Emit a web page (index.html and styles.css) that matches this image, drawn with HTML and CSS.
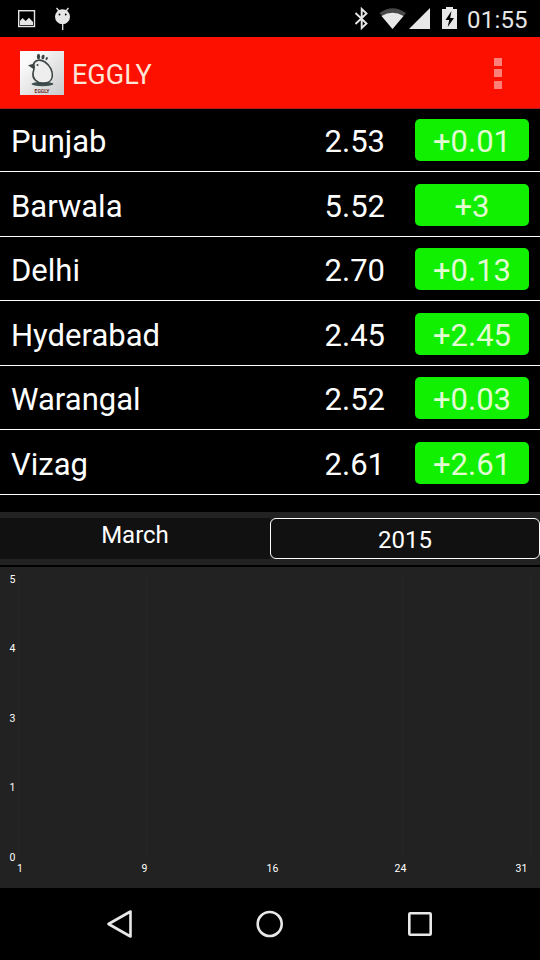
FILE: index.html
```html
<!DOCTYPE html>
<html lang="en">
<head>
<meta charset="utf-8">
<title>EGGLY</title>
<link rel="stylesheet" href="styles.css">
</head>
<body>
<div class="screen">
  <header class="status">
    <svg class="status-left" width="90" height="37" viewBox="0 0 90 37">
      <rect x="18.7" y="10.7" width="15.8" height="15.8" fill="none" stroke="#e6e6e6" stroke-width="1.4"/>
      <path d="M20 25v-4l2.500-3 3.200 3 3.300-3.200L33 22v3z" fill="#e6e6e6"/>
      <circle cx="62.500" cy="16.700" r="7.500" fill="#e6e6e6"/>
      <path d="M59 11l-2.500-3M66 11l2.500-3M62.700 24v6" stroke="#e6e6e6" stroke-width="1.300"/>
      <circle cx="59.500" cy="14.500" r=".9"/><circle cx="65.700" cy="14.500" r=".9"/>
    </svg>
    <svg class="status-right" width="106" height="37" viewBox="354 0 106 37">
      <path d="M355.500 13l11 10.500-4.800 4.500V9l4.800 4.500-11 10.500" fill="none" stroke="#e6e6e6" stroke-width="1.900"/>
      <path d="M379.500 13q13-9.500 26.500 0L392.500 29z" fill="#484848"/>
      <path d="M381.500 16q11-6.500 22 0L392.500 29z" fill="#e8e8e8"/>
      <path d="M430 8v21h-21z" fill="#e8e8e8"/>
      <path d="M442 9h4V7h7v2h4v20h-15z" fill="#e8e8e8"/>
      <path d="M451.500 11l-6 9h3.700l-1.500 7 6.300-9h-3.800z"/>
    </svg>
    <span class="clock">01:55</span>
  </header>
  <div class="appbar">
    <svg class="logo" width="44" height="44" viewBox="0 0 44 44">
      <defs><linearGradient id="lg" x1="0" y1="0" x2="1" y2="1"><stop offset=".2" stop-color="#fafafa"/><stop offset="1" stop-color="#c9cacb"/></linearGradient></defs>
      <rect width="44" height="44" fill="url(#lg)"/>
      <ellipse cx="22.500" cy="33" rx="11" ry="2.200" fill="#3c4d4d"/>
      <path d="M13.500 13C15.500 8.500 20.500 8 25 11c5 3.500 8 9.500 7.300 14.500-.6 4.500-4.800 6.800-9.800 6.500-6-.3-10.300-4.500-9.500-10 .4-3 2.500-4.500.5-9z" fill="#eee" stroke="#3c4444" stroke-width="1.600"/>
      <path d="M14.500 12.500l-6.500 1.700 6 4.300z" fill="#3c4444"/>
      <circle cx="17.500" cy="14" r="1" fill="#3c4444"/>
      <g fill="#3c4444"><ellipse cx="18.500" cy="5.500" rx="1.600" ry="2.800"/><ellipse cx="23" cy="6" rx="1.500" ry="2.400" transform="rotate(15 23 6)"/><ellipse cx="26.700" cy="7.600" rx="1" ry="1.700" transform="rotate(30 26.700 7.600)"/></g>
      <text class="logo-text" x="22" y="41.800" text-anchor="middle">EGGLY</text>
    </svg>
    <h1 class="title">EGGLY</h1>
    <div class="overflow"><i></i><i></i><i></i></div>
  </div>
  <main class="rates">
    <div class="rate"><span class="city">Punjab</span><span class="price">2.53</span><span class="change">+0.01</span></div>
    <div class="rate"><span class="city">Barwala</span><span class="price">5.52</span><span class="change">+3</span></div>
    <div class="rate"><span class="city">Delhi</span><span class="price">2.70</span><span class="change">+0.13</span></div>
    <div class="rate"><span class="city">Hyderabad</span><span class="price">2.45</span><span class="change">+2.45</span></div>
    <div class="rate"><span class="city">Warangal</span><span class="price">2.52</span><span class="change">+0.03</span></div>
    <div class="rate"><span class="city">Vizag</span><span class="price">2.61</span><span class="change">+2.61</span></div>
  </main>
  <div class="period"><div class="month">March</div><div class="year">2015</div></div>
  <svg class="chart" width="540" height="321" viewBox="0 567 540 321">
    <path d="M18.500 576v280M146.500 576v280M402.500 576v280M530.500 576v280" stroke="#252525" stroke-width="2"/>
    <g class="axis" text-anchor="middle">
      <text x="12.500" y="582.500">5</text><text x="12.500" y="652">4</text><text x="12.500" y="721.500">3</text><text x="12.500" y="791">1</text><text x="12.500" y="860.500">0</text>
      <text x="20" y="872">1</text><text x="144.500" y="872">9</text><text x="272.500" y="872">16</text><text x="400.500" y="872">24</text><text x="521.500" y="872">31</text>
    </g>
  </svg>
  <nav class="navbar">
    <svg width="30" height="30" viewBox="105 909 30 30"><path d="M108.500 924L130.500 911.500v25z"/></svg>
    <svg width="30" height="30" viewBox="255 909 30 30"><circle cx="269.700" cy="924" r="12"/></svg>
    <svg width="30" height="30" viewBox="405 909 30 30"><rect x="409.300" y="913.300" width="21.400" height="21.400" rx="1"/></svg>
  </nav>
</div>
</body>
</html>
```
FILE: styles.css
```css
* { box-sizing: border-box; }
body { margin: 0; background: #000; color: #fff; font-family: Roboto, "Liberation Sans", sans-serif; }
.screen { width: 540px; height: 960px; display: flex; flex-direction: column; overflow: hidden; }
.status { height: 37px; display: flex; align-items: center; flex: none; }
.status-right { margin-left: auto; }
.clock { width: 68px; margin-left: 7px; margin-right: 5px; font-size: 24px; line-height: 37px; padding-top: 3px; color: #e6e6e6; font-weight: 400; letter-spacing: .2px; white-space: nowrap; }
.appbar { height: 72px; flex: none; background: #fe1000; border-bottom: 1px solid #b02020; display: flex; align-items: center; padding: 0 38px 0 20px; }
.title { margin: 4px 0 0 8px; font-size: 27px; line-height: 32px; font-weight: 400; color: #fee6d8; }
.logo-text { font-size: 5px; font-weight: 700; fill: #70302c; }
.overflow { margin-left: auto; margin-top: 1px; display: grid; gap: 3.500px; }
.overflow i { width: 8px; height: 8px; background: #ff8078; }
.rates { height: 403px; flex: none; display: grid; grid-template-rows: 63px 65px 64px 65px 64px 65px; font-size: 31px; }
.rate { display: flex; align-items: flex-end; border-bottom: 1px solid #fff; padding: 0 11px 10px; line-height: 38px; }
.price { margin-left: auto; margin-right: 30px; }
.change { width: 114px; height: 42px; padding-top: 4px; border-radius: 5px; background: #10f000; color: #e2fbd2; text-align: center; }
.period { height: 53px; flex: none; background: #222; padding: 6px 0; display: grid; grid-template-columns: 1fr 1fr; font-size: 24px; text-align: center; }
.month { height: 41px; background: #111; line-height: 34px; }
.year { height: 41px; background: #111; border: 1px solid #fff; border-radius: 6px; line-height: 42px; }
.chart { display: block; flex: none; margin-top: 2px; background: #222; }
.axis { font-size: 10.500px; fill: #fff; }
.navbar { height: 72px; flex: none; display: flex; justify-content: center; align-items: center; gap: 120px; }
.navbar path, .navbar circle, .navbar rect { fill: none; stroke: #e8e8e8; stroke-width: 2.600; stroke-linejoin: round; }
```
